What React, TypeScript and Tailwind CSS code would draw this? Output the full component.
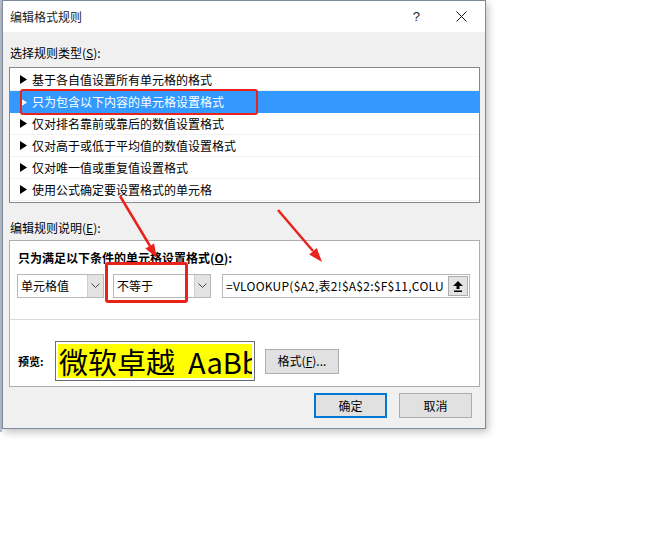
import React from 'react'

const rules = [
  '基于各自值设置所有单元格的格式',
  '只为包含以下内容的单元格设置格式',
  '仅对排名靠前或靠后的数值设置格式',
  '仅对高于或低于平均值的数值设置格式',
  '仅对唯一值或重复值设置格式',
  '使用公式确定要设置格式的单元格',
]

const Tri = ({ white }: { white?: boolean }) => (
  <svg width="7" height="9" viewBox="0 0 7 9" className="shrink-0">
    <polygon points="0,0 7,4.5 0,9" fill={white ? '#ffffff' : '#000000'} />
  </svg>
)

const Chevron = () => (
  <svg width="9" height="6" viewBox="0 0 9 6">
    <polyline points="0.5,0.5 4.5,4.5 8.5,0.5" fill="none" stroke="#444" strokeWidth="1" />
  </svg>
)

const Combo = ({ text, w }: { text: string; w: string }) => (
  <div className={`flex h-[24px] ${w} items-stretch border border-[#b8b8b8] bg-white`}>
    <div className="flex flex-1 items-center pl-[3px] text-[12px] leading-[16px]">{text}</div>
    <div className="flex w-[16px] items-center justify-center border-l border-[#cfcfcf] bg-[#e3e3e3]">
      <Chevron />
    </div>
  </div>
)

const App = () => {
  return (
    <div className="relative h-[543px] w-[658px] overflow-hidden bg-white font-['Noto_Sans_CJK_SC',sans-serif] text-black">
      <div className="flex">
        <div className="h-[432px] w-[2px] bg-[#b9c0ca]" />
        <div className="relative flex h-[429px] w-[484px] flex-col border border-[#7e8a9c] bg-[#f0f0f0] shadow-[2px_3px_8px_rgba(0,0,0,0.25)]">
          {/* title bar */}
          <div className="flex h-[31px] items-center bg-white pl-[7px] pr-[18px]">
            <span className="text-[12px] leading-[16px] text-[#222]">编辑格式规则</span>
            <span className="ml-auto mr-[36px] font-['Liberation_Sans',sans-serif] text-[13px] text-[#222]">?</span>
            <svg width="11" height="11" viewBox="0 0 11 11">
              <line x1="0.5" y1="0.5" x2="10.5" y2="10.5" stroke="#111" strokeWidth="1" />
              <line x1="10.5" y1="0.5" x2="0.5" y2="10.5" stroke="#111" strokeWidth="1" />
            </svg>
          </div>

          {/* body */}
          <div className="flex flex-col pt-[13px]">
            <div className="ml-[7px] text-[12px] leading-[16px]">
              选择规则类型(<span className="underline">S</span>):
            </div>
            <div className="ml-[6px] mt-[6px] flex h-[136px] w-[471px] flex-col border border-[#828790] bg-white pt-px">
              {rules.map((r, i) => (
                <div
                  key={r}
                  className={
                    i === 1
                      ? 'flex h-[22px] items-center gap-[5px] bg-[#3399ff] pl-[10px] text-white'
                      : 'flex h-[22px] items-center gap-[5px] border-b border-[#f2f2f2] pl-[10px]'
                  }
                >
                  <Tri white={i === 1} />
                  <span className="text-[12px] leading-[16px]">{r}</span>
                </div>
              ))}
            </div>

            <div className="ml-[7px] mt-[17px] text-[12px] leading-[16px]">
              编辑规则说明(<span className="underline">E</span>):
            </div>
            <div className="ml-[6px] mt-[4px] flex h-[147px] w-[471px] flex-col border border-[#adadad] bg-white">
              <div className="ml-[8px] mt-[9px] text-[12px] font-bold leading-[16px]">
                只为满足以下条件的单元格设置格式(<span className="underline">O</span>):
              </div>
              <div className="ml-[7px] mt-[8px] flex items-center">
                <Combo text="单元格值" w="w-[87px]" />
                <div className="ml-[9px]">
                  <Combo text="不等于" w="w-[98px]" />
                </div>
                <div className="ml-[11px] flex h-[24px] w-[248px] items-center border border-[#b8b8b8] bg-white">
                  <div className="flex-1 overflow-hidden whitespace-nowrap pl-[3px] text-[12px] leading-[16px] tracking-[0.25px]">
                    =VLOOKUP($A2,表2!$A$2:$F$11,COLU
                  </div>
                  <div className="mr-px flex h-[20px] w-[20px] items-center justify-center border border-[#adadad] bg-[#e3e3e3]">
                    <svg width="10" height="11" viewBox="0 0 10 11">
                      <polygon points="5,0 10,5 6.5,5 6.5,8 3.5,8 3.5,5 0,5" fill="#000" />
                      <rect x="1" y="9.5" width="8" height="1.5" fill="#000" />
                    </svg>
                  </div>
                </div>
              </div>
              <div className="mt-[21px] h-px w-full bg-[#dadada]" />
              <div className="mt-[21px] flex items-center">
                <div className="ml-[8px] w-[37px] text-[11px] font-bold leading-[14px]">预览:</div>
                <div className="h-[40px] w-[200px] border border-[#6d6d6d] bg-white p-[2px]">
                  <div className="flex h-full items-center overflow-hidden whitespace-nowrap bg-[#ffff00] pl-px text-[29px] leading-[34px]">
                    微软卓越&nbsp;&nbsp;AaBb
                  </div>
                </div>
                <button className="ml-[10px] h-[25px] w-[74px] border border-[#adadad] bg-[#e1e1e1] text-[12px] leading-[16px]">
                  格式(<span className="underline">F</span>)...
                </button>
              </div>
            </div>

            <div className="mt-[6px] flex justify-end gap-[12px] pr-[13px]">
              <button className="h-[25px] w-[73px] border-2 border-[#0078d7] bg-[#e1e1e1] text-[12px] leading-[16px]">
                确定
              </button>
              <button className="h-[25px] w-[73px] border border-[#adadad] bg-[#e1e1e1] text-[12px] leading-[16px]">
                取消
              </button>
            </div>
          </div>
        </div>
      </div>

      {/* annotations */}
      <div className="absolute left-[20px] top-[89px] h-[26px] w-[238px] rounded-[3px] border-2 border-[#e8231b]" />
      <div className="absolute left-[105px] top-[262px] h-[41px] w-[83px] rounded-[3px] border-[3px] border-[#e8231b]" />
      <svg className="absolute left-0 top-0" width="658" height="543" viewBox="0 0 658 543">
        <line x1="120" y1="196" x2="150" y2="246" stroke="#e8231b" strokeWidth="2.5" />
        <polygon points="157,258 145.4,248.6 154,243.4" fill="#e8231b" />
        <line x1="278" y1="210" x2="313" y2="251" stroke="#e8231b" strokeWidth="2.5" />
        <polygon points="322,262 309.2,254.5 316.8,248.1" fill="#e8231b" />
      </svg>
    </div>
  )
}

export default App
